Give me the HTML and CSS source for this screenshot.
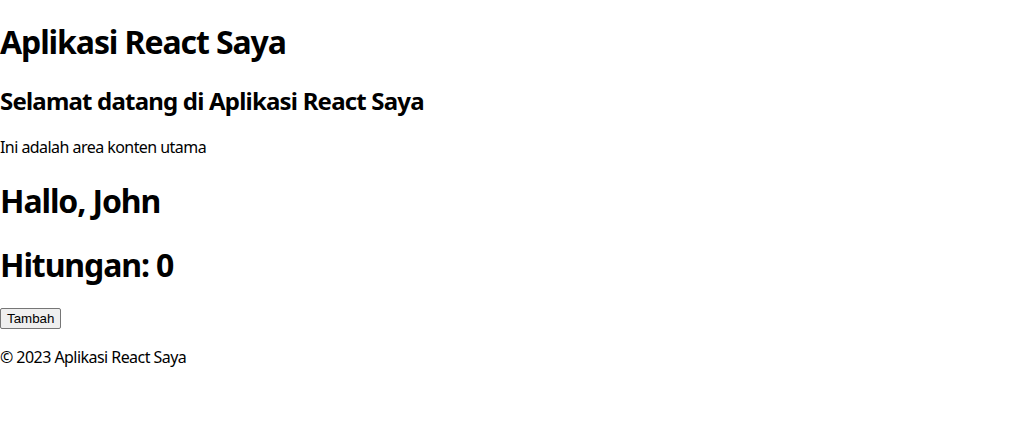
FILE: index.html
```html
<!DOCTYPE html>
<html lang="id">
<head>
<meta charset="utf-8">
<title>Aplikasi React Saya</title>
<link rel="stylesheet" href="styles.css">
</head>
<body>
<div class="app">
  <header class="header">
    <h1 class="title">Aplikasi React Saya</h1>
  </header>
  <main class="main">
    <h2 class="subtitle">Selamat datang di Aplikasi React Saya</h2>
    <p class="text">Ini adalah area konten utama</p>
    <h1 class="title">Hallo, John</h1>
    <div class="counter">
      <h1 class="title">Hitungan: 0</h1>
      <button class="btn">Tambah</button>
    </div>
  </main>
  <footer class="footer">
    <p class="text footer-text">© 2023 Aplikasi React Saya</p>
  </footer>
</div>
</body>
</html>
```

FILE: styles.css
```css
html, body {
  margin: 0;
  padding: 0;
  background: #fff;
}
body {
  font-family: "Noto Sans", "Open Sans", sans-serif;
  color: #000;
  line-height: 1.33;
}
.title {
  font-size: 32px;
  font-weight: 700;
  margin: 21.44px 0;
  letter-spacing: -1.1px;
}
.subtitle {
  font-size: 24px;
  font-weight: 700;
  margin: 19.92px 0;
  letter-spacing: -0.8px;
}
.text {
  font-size: 16px;
  margin: 16px 0;
  letter-spacing: -0.55px;
}
.footer-text {
  margin-top: 18px;
}
.btn {
  display: block;
  font-family: "Liberation Sans", Arial, sans-serif;
  font-size: 13.33px;
  line-height: 17px;
  padding: 1px 6px;
  border: 1px solid #767676;
  border-radius: 2px;
  background: #efefef;
  color: #000;
  margin: 0;
}
```
